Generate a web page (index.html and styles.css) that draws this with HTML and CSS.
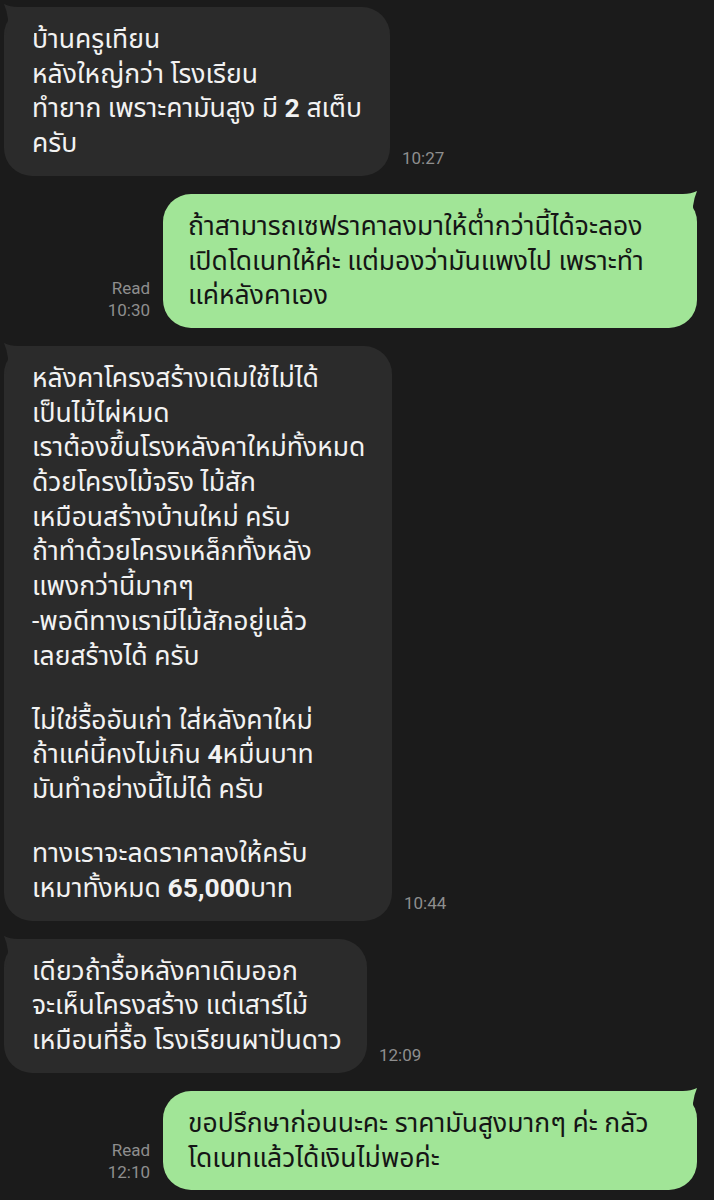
FILE: index.html
```html
<!DOCTYPE html>
<html lang="th">
  <head>
    <meta charset="utf-8" />
    <meta name="viewport" content="width=device-width, initial-scale=1.0" />
    <title>Chat</title>
    <link rel="stylesheet" href="styles.css">
  </head>
  <body>
    <div class="chat">

      <div class="row in">
        <div class="bubble in w-1">
          <svg class="tail" viewBox="0 0 32 34"><path d="M32 4 L16 4 Q8 4 2 1 Q5 8 6 16 Q6 24 3 34 L32 34 Z"/></svg>
          <div>บ้านครูเทียน</div>
          <div>หลังใหญ่กว่า โรงเรียน</div>
          <div>ทำยาก เพราะคามันสูง มี <b>2</b> สเต็บ</div>
          <div>ครับ</div>
        </div>
        <div class="meta">10:27</div>
      </div>

      <div class="row out">
        <div class="meta"><span>Read</span><span>10:30</span></div>
        <div class="bubble out">
          <svg class="tail" viewBox="0 0 32 34"><path d="M0 4 L16 4 Q24 4 30 1 Q27 8 26 16 Q26 24 29 34 L0 34 Z"/></svg>
          <div>ถ้าสามารถเซฟราคาลงมาให้ต่ำกว่านี้ได้จะลอง</div>
          <div>เปิดโดเนทให้ค่ะ แต่มองว่ามันแพงไป เพราะทำ</div>
          <div>แค่หลังคาเอง</div>
        </div>
      </div>

      <div class="row in">
        <div class="bubble in w-3">
          <svg class="tail" viewBox="0 0 32 34"><path d="M32 4 L16 4 Q8 4 2 1 Q5 8 6 16 Q6 24 3 34 L32 34 Z"/></svg>
          <div>หลังคาโครงสร้างเดิมใช้ไม่ได้</div>
          <div>เป็นไม้ไผ่หมด</div>
          <div>เราต้องขึ้นโรงหลังคาใหม่ทั้งหมด</div>
          <div>ด้วยโครงไม้จริง ไม้สัก</div>
          <div>เหมือนสร้างบ้านใหม่ ครับ</div>
          <div>ถ้าทำด้วยโครงเหล็กทั้งหลัง</div>
          <div>แพงกว่านี้มากๆ</div>
          <div>-พอดีทางเรามีไม้สักอยู่แล้ว</div>
          <div>เลยสร้างได้ ครับ</div>
          <div class="gap"></div>
          <div>ไม่ใช่รื้ออันเก่า ใส่หลังคาใหม่</div>
          <div>ถ้าแค่นี้คงไม่เกิน <b>4</b>หมื่นบาท</div>
          <div>มันทำอย่างนี้ไม่ได้ ครับ</div>
          <div class="gap"></div>
          <div>ทางเราจะลดราคาลงให้ครับ</div>
          <div>เหมาทั้งหมด <b>65,000</b>บาท</div>
        </div>
        <div class="meta">10:44</div>
      </div>

      <div class="row in">
        <div class="bubble in w-4">
          <svg class="tail" viewBox="0 0 32 34"><path d="M32 4 L16 4 Q8 4 2 1 Q5 8 6 16 Q6 24 3 34 L32 34 Z"/></svg>
          <div>เดียวถ้ารื้อหลังคาเดิมออก</div>
          <div>จะเห็นโครงสร้าง แต่เสาร์ไม้</div>
          <div>เหมือนที่รื้อ โรงเรียนผาปันดาว</div>
        </div>
        <div class="meta">12:09</div>
      </div>

      <div class="row out">
        <div class="meta"><span>Read</span><span>12:10</span></div>
        <div class="bubble out">
          <svg class="tail" viewBox="0 0 32 34"><path d="M0 4 L16 4 Q24 4 30 1 Q27 8 26 16 Q26 24 29 34 L0 34 Z"/></svg>
          <div>ขอปรึกษาก่อนนะคะ ราคามันสูงมากๆ ค่ะ กลัว</div>
          <div>โดเนทแล้วได้เงินไม่พอค่ะ</div>
        </div>
      </div>

    </div>
  </body>
</html>
```

FILE: styles.css
```css
html {
  --bg: #1b1b1b;
  --bubble-in: #2b2b2b;
  --bubble-out: #a1e597;
  --meta: #8e8e8e;
}
body {
  margin: 0;
  background: var(--bg);
  font-family: Roboto, "Noto Sans Thai", "Noto Sans", sans-serif;
}
.chat {
  display: flex;
  flex-direction: column;
  gap: 18px;
  padding: 7px 17px 0 4px;
}
.row {
  display: flex;
  align-items: flex-end;
  gap: 12px;
}
.row.out {
  justify-content: flex-end;
  gap: 13px;
}
.bubble {
  position: relative;
  box-sizing: border-box;
  padding: 15px 18px 15px 28px;
  border-radius: 28px;
  font-size: 26.5px;
  line-height: 34.7px;
  white-space: nowrap;
}
.bubble b {
  font-weight: 700;
}
.bubble.in {
  background: var(--bubble-in);
  color: #f2f2f2;
}
.bubble.out {
  width: 534px;
  padding-left: 25px;
  background: var(--bubble-out);
  color: #151515;
}
.w-1 { width: 386px; }
.w-3 { width: 388px; }
.w-4 { width: 363px; }
.gap {
  height: 29.5px;
}
.tail {
  position: absolute;
  top: -4px;
  width: 32px;
  height: 34px;
}
.bubble.in .tail {
  left: -2px;
  fill: var(--bubble-in);
}
.bubble.out .tail {
  right: -2px;
  fill: var(--bubble-out);
}
.meta {
  display: flex;
  flex-direction: column;
  align-items: flex-end;
  padding-bottom: 7px;
  color: var(--meta);
  font-size: 17px;
  line-height: 22px;
}
```
